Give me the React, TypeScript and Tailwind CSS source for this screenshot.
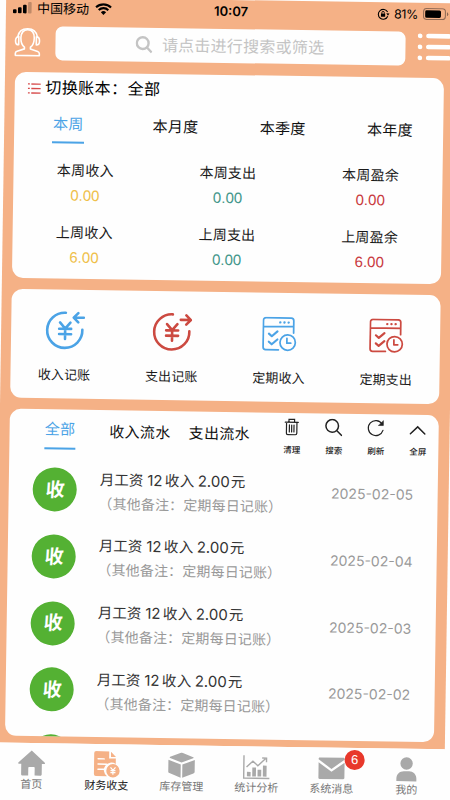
import type { FC, ReactNode } from "react";
import React from "react";

const periods = ["本周", "本月度", "本季度", "本年度"];

const stats = [
  { label: "本周收入", value: "0.00", color: "text-[#efc04a]" },
  { label: "本周支出", value: "0.00", color: "text-[#44978b]" },
  { label: "本周盈余", value: "0.00", color: "text-[#c93b3e]" },
  { label: "上周收入", value: "6.00", color: "text-[#efc04a]" },
  { label: "上周支出", value: "0.00", color: "text-[#44978b]" },
  { label: "上周盈余", value: "6.00", color: "text-[#c93b3e]" },
];

const dates = ["2025-02-05", "2025-02-04", "2025-02-03", "2025-02-02", "2025-02-01"];

const CoinIcon: FC<{ out?: boolean }> = ({ out }) => (
  <svg width="40" height="40" viewBox="0 0 40 40" fill="none" stroke="currentColor" strokeWidth="2.6" strokeLinecap="round" strokeLinejoin="round">
    <path d="M20.5 2.2A17.6 17.6 0 1 0 37.2 19" />
    <path d="M14.8 12l5.2 6 5.2-6M20 18v10.5M14 18.3h12M14 23.6h12" />
    {out ? <path d="M28.5 7.6h9.7M34 3l4.6 4.6-4.6 4.6" /> : <path d="M38.5 7h-9.7M33 2.4L28.4 7l4.6 4.6" />}
  </svg>
);

const ScheduleIcon = () => (
  <svg width="35" height="35" viewBox="0 0 36 36" fill="none" stroke="currentColor" strokeWidth="1.8" strokeLinecap="round" strokeLinejoin="round">
    <path d="M17 34H3.8A2.6 2.6 0 0 1 1.2 31.4V3.8A2.6 2.6 0 0 1 3.8 1.2h26a2.6 2.6 0 0 1 2.6 2.6V16.5M1.2 10h31.2" />
    <path d="M7 17.5l3 2.6 5.8-5M7 25.8l3 2.6 5.8-5" strokeWidth="2.2" />
    <circle cx="26.4" cy="26.4" r="7.9" />
    <path d="M25.6 22v5h4" />
    <path d="M18.5 5.8h.1M22.8 5.8h.1M27.1 5.8h.1" strokeWidth="2.4" />
  </svg>
);

const shortcuts = [
  { label: "收入记账", color: "text-[#4ba3e6]", icon: <CoinIcon /> },
  { label: "支出记账", color: "text-[#cc4a41]", icon: <CoinIcon out /> },
  { label: "定期收入", color: "text-[#4ba3e6]", icon: <ScheduleIcon /> },
  { label: "定期支出", color: "text-[#cc4a41]", icon: <ScheduleIcon /> },
];

const actions = [
  {
    label: "清理",
    icon: <path d="M2.5 4.3h13M6.2 4V1.3h5.6V4M3.8 4.5v10.8a1.4 1.4 0 0 0 1.4 1.4h7.6a1.4 1.4 0 0 0 1.4-1.4V4.5M6.7 7v7M9 7v7M11.3 7v7" strokeWidth="1.2" />,
  },
  {
    label: "搜索",
    icon: <path d="M7.5 1a6.3 6.3 0 1 0 0 12.6 6.3 6.3 0 0 0 0-12.6M12 11.8l4.8 4.8" strokeWidth="1.5" />,
  },
  {
    label: "刷新",
    icon: (
      <>
        <path d="M15.3 4.6A7.5 7.5 0 1 0 16.3 11" strokeWidth="1.2" />
        <path d="M16.6 1.6v4.6H12z" fill="currentColor" strokeWidth=".6" />
      </>
    ),
  },
  { label: "全屏", icon: <path d="M1.8 14L9 7l7.2 7" strokeWidth="1.5" /> },
];

const navItems = [
  {
    label: "首页",
    icon: <path d="M14 .5L1 12.3c-.8.8-.5 1.5.5 1.5h2.2V24c0 1 .5 1.5 1.4 1.5h5.7V18c0-.7.4-1 1-1h4.4c.6 0 1 .3 1 1v7.5h5.7c.9 0 1.4-.5 1.4-1.5V13.8h2.2c1 0 1.3-.7.5-1.5z" />,
  },
  {
    label: "财务收支",
    icon: (
      <>
        <path d="M3.5 0h13v7.2h6.7v5.5a7.5 7.5 0 0 0-8.6 12.3H3.5a2 2 0 0 1-2-2V2a2 2 0 0 1 2-2zM18.3.5l5 5.2h-5z" />
        <path d="M5.5 7.7h6M5.5 13h8.500M5.5 18.2h6" stroke="white" strokeWidth="1.5" strokeLinecap="round" />
        <circle cx="20.5" cy="19.5" r="6.7" />
        <path d="M18 16l2.5 3 2.5-3M20.5 19v4.5M18 19.3h5M18 21.3h5" fill="none" stroke="white" strokeWidth="1.2" />
      </>
    ),
  },
  {
    label: "库存管理",
    icon: <path d="M14 .1l11.500 4.500c.7.3.7.8 0 1.1L14 10.200 2.500 5.700c-.7-.3-.7-.8 0-1.100zM.8 7.500l12.400 4.700V25.500L2 20.900C1.100 20.500.8 20.100.8 19.300zM27.200 7.500v11.800c0 .8-.3 1.200-1.200 1.600L14.800 25.500V12.200z" />,
  },
  {
    label: "统计分析",
    icon: (
      <>
        <path d="M1.3 2v22.800H27M4 13.700l6.300-6 5 4.500 7.500-7M19.500 4.500h4.400v4" fill="none" stroke="currentColor" strokeWidth="1.4" />
        <path d="M4.500 18.5h3.700V23H4.500zM9.800 14h3.700v9H9.800zM15.100 16.300h3.700V23h-3.700zM20.400 12h3.700v11h-3.700z" />
      </>
    ),
  },
  {
    label: "系统消息",
    badge: 6,
    icon: <path d="M2.2 3h23.600c.7 0 1.200.5 1.200 1.200v.6L14 14.300 1 4.800v-.6C1 3.500 1.500 3 2.200 3zM1 7.800l13 9.400 13-9.400v15.500c0 .7-.5 1.200-1.200 1.200H2.200c-.7 0-1.200-.5-1.200-1.200z" />,
  },
  {
    label: "我的",
    icon: (
      <>
        <circle cx="14" cy="7.7" r="6.2" />
        <path d="M4 25.500v-2.600c0-4.600 3.400-7.400 7.400-7.400h5.200c4 0 7.400 2.800 7.400 7.400v2.600z" />
      </>
    ),
  },
];

const Card: FC<{ className: string; children: ReactNode }> = ({ className, children }) => (
  <section className={`ml-[10.4px] w-[429px] shrink-0 overflow-hidden rounded-[11px] bg-[#fefefe] ${className}`}>{children}</section>
);

const StatusBar = () => (
  <div className="flex h-[24px] items-center pl-[7px] text-[13px] leading-none">
    <svg width="20" height="12" viewBox="0 0 20 12" className="-mt-[2px] mr-1">
      <rect x="0" y="7.5" width="3.6" height="4" rx="1" />
      <rect x="5" y="5.5" width="3.6" height="6" rx="1" />
      <rect x="10" y="2.8" width="3.6" height="8.7" rx="1" />
      <rect x="15" y="0" width="3.6" height="11.5" rx="1" opacity=".22" />
    </svg>
    <span className="-mt-[1px] w-[58px] whitespace-nowrap">中国移动</span>
    <svg width="17" height="12" viewBox="0 0 17 12" fill="none" stroke="black" strokeWidth="2.1" className="-mt-[2px]">
      <path d="M1 4.3a10.8 10.8 0 0 1 15 0M3.7 7a7 7 0 0 1 9.6 0" />
      <path d="M8.5 11.8L5.9 9.2a3.8 3.8 0 0 1 5.2 0z" fill="black" stroke="none" />
    </svg>
    <span className="-mt-[1px] ml-[102px] w-[44px] font-[Inter] text-[13px] font-semibold">10:07</span>
    <svg width="13" height="12" viewBox="0 0 13 12" fill="none" stroke="black" strokeWidth="1.1" className="ml-[119px]">
      <path d="M10.6 3.7A4.9 4.9 0 1 0 10.8 7.8" />
      <path d="M9.3 5h3.2L11 7.3z" fill="black" stroke="none" />
      <rect x="4" y="5.3" width="4.2" height="3.2" fill="black" stroke="none" />
      <path d="M4.9 5.5V4.3a1.2 1.2 0 0 1 2.4 0v1.2" strokeWidth=".9" />
    </svg>
    <span className="ml-[4px] w-[29px] font-[Inter] text-[12.5px] tracking-tight">81%</span>
    <svg width="27" height="12" viewBox="0 0 27 12" className="-mt-[2px] shrink-0">
      <rect x=".6" y=".6" width="21.8" height="10.8" rx="3" fill="none" stroke="#8d6853" strokeWidth="1" />
      <rect x="2.2" y="2.2" width="15.8" height="7.6" rx="1.5" />
      <path d="M24 4v4a2.2 2.2 0 0 0 0-4z" fill="#8d6853" />
    </svg>
  </div>
);

const SearchBar = () => (
  <div className="mt-[4.8px] flex h-[34.5px] items-center">
    <svg width="28" height="30" viewBox="0 0 28 30" fill="none" stroke="white" strokeWidth="1.6" strokeLinejoin="round" className="-mt-[2px] ml-[7.5px]">
      <path d="M11 20.3C8.400 18.500 7.300 15 7.300 11 7.300 6 9.800 2.800 14 2.800S20.700 6 20.700 11c0 4-1.100 7.500-3.700 9.300v1.700l7.300 2.400c1.200.4 1.700 1 1.700 2.200v2H2v-2c0-1.200.5-1.800 1.700-2.200L11 22z" />
      <path d="M4.300 9.600C5.200 4.500 8.500 1.800 14 1.800s8.800 2.700 9.700 7.800M5.200 9.800c-2 0-3.200 1.500-3.200 4.100S3.200 18 5.200 18zM22.800 9.800c2 0 3.200 1.500 3.200 4.100s-1.200 4.100-3.200 4.100z" />
    </svg>
    <div className="ml-[14px] flex h-full w-[350.5px] items-center justify-center rounded-[7px] bg-[#fefefe] text-[16px] tracking-[.25px] text-[#c4c4c4]">
      <svg width="17" height="18" viewBox="0 0 17 18" fill="none" stroke="#c4c4c4" strokeWidth="2.4" className="mr-[9px]">
        <circle cx="7.2" cy="7.4" r="5.9" />
        <path d="M11.5 11.8l4.8 4.9" />
      </svg>
      <span className="mt-[1px]">请点击进行搜索或筛选</span>
    </div>
    <svg width="36" height="28" viewBox="0 0 36 28" fill="white" className="-mt-[4.5px] ml-[11.5px]">
      {[3, 14, 25].map((y) => (
        <g key={y}>
          <circle cx="2.5" cy={y} r="2.4" />
          <rect x="8.5" y={y - 2.3} width="25" height="4.6" rx="2.3" />
        </g>
      ))}
    </svg>
  </div>
);

const Summary = () => (
  <Card className="mt-[11.7px] flex h-[206.5px] flex-col">
    <div className="mt-[4.5px] flex h-[24px] items-center pl-[12.5px] text-[16px] tracking-[.5px] text-black">
      <svg width="13" height="11" viewBox="0 0 13 11" stroke="#d64a4a" strokeWidth="1.3" className="mr-[4.5px]">
        <path d="M0 1h2M0 5.5h2M0 10h2M3.5 1H13M3.5 5.5H13M3.5 10H13" />
      </svg>
      切换账本：全部
    </div>
    <div className="mt-[12.5px] grid grid-cols-4 text-[15px] tracking-[.2px]">
      {periods.map((name, i) => (
        <div key={name} className="flex flex-col items-center">
          <span className={i === 0 ? "leading-[22px] text-[#4ba3e6]" : "leading-[24px] text-[#111]"}>{name}</span>
          {i === 0 && <span className="mt-[6px] h-[2px] w-[32px] bg-[#4ba3e6]" />}
        </div>
      ))}
    </div>
    <div className="mr-[1px] mt-[15.3px] grid grid-cols-3 text-center">
      {stats.map((s) => (
        <div key={s.label} className="h-[61.6px]">
          <div className="text-[14px] leading-[24px] tracking-[.2px] text-[#1a1a1a]">{s.label}</div>
          <div className={`mt-[1px] text-[15px] leading-[24px] ${s.color}`}>{s.value}</div>
        </div>
      ))}
    </div>
  </Card>
);

const Shortcuts = () => (
  <Card className="mt-[10.5px] grid h-[108.7px] grid-cols-4">
    {shortcuts.map((s) => (
      <div key={s.label} className="flex flex-col items-center pr-[1px] pt-[20.5px]">
        <div className={`flex h-[42px] items-center ${s.color}`}>{s.icon}</div>
        <span className="mt-[13.5px] text-[13px] leading-[20px] tracking-[.1px] text-[#1a1a1a]">{s.label}</span>
      </div>
    ))}
  </Card>
);

const Records = () => (
  <Card className="mt-[11.3px] h-[326.7px]">
    <div className="flex h-[47px] text-[15px] tracking-[.3px] text-[#111]">
      <div className="ml-[34.5px] flex w-[32px] flex-col items-center pt-[9.5px] text-[#4ba3e6]">
        <span className="leading-[22px]">全部</span>
        <span className="mt-[6.5px] h-[2px] w-full bg-[#4ba3e6]" />
      </div>
      <span className="ml-[33.5px] w-[81px] whitespace-nowrap pt-[11px] leading-[22px]">收入流水</span>
      <span className="w-[82px] whitespace-nowrap pt-[11px] leading-[22px]">支出流水</span>
      <div className="ml-[2px] flex">
        {actions.map((a) => (
          <div key={a.label} className="flex w-[42px] flex-col items-center pt-[5.5px] text-[#222]">
            <svg width="18" height="18" viewBox="0 0 18 18" fill="none" stroke="currentColor" strokeLinecap="round">
              {a.icon}
            </svg>
            <span className="mt-[7px] text-[8.5px] font-medium leading-[14px] tracking-normal">{a.label}</span>
          </div>
        ))}
      </div>
    </div>
    {dates.map((date) => (
      <div key={date} className="flex h-[66.7px] items-center">
        <div className="ml-[24px] flex size-[44px] items-center justify-center rounded-full bg-[#54b133] text-white">
          <span className="-rotate-3 -skew-x-6 text-[19px] font-bold leading-none">收</span>
        </div>
        <div className="ml-[22.5px] mt-[2.5px] w-[231.5px] whitespace-nowrap">
          <div className="flex text-[14.5px] leading-[24px] text-[#333]">
            <span>月工资</span>
            <span className="ml-[4px] w-[17.5px] font-[Inter] text-[15px]">12</span>
            <span className="tracking-[.5px]">收入</span>
            <span className="ml-[3px] w-[33px] font-[Inter] text-[15px]">2.00</span>
            <span>元</span>
          </div>
          <div className="-ml-[1px] text-[14px] leading-[24px] tracking-[.15px] text-[#999]">（其他备注：定期每日记账）</div>
        </div>
        <span className="font-[Inter] text-[14px] leading-none text-[#999]">{date}</span>
      </div>
    ))}
  </Card>
);

const TabBar = () => (
  <nav className="grid h-[80px] grid-cols-6 bg-[#fefefe] text-[11px] text-[#777]">
    {navItems.map((item, i) => (
      <div key={item.label} className="flex flex-col items-center pr-[1px] pt-[7px]">
        <div className={`relative ${i === 1 ? "text-[#f5b186]" : "text-[#a9a9a9]"}`}>
          <svg width="28" height="27" viewBox="0 0 28 27" fill="currentColor">
            {item.icon}
          </svg>
          {item.badge && (
            <span className="absolute -right-[19px] -top-[4.5px] flex size-[20px] items-center justify-center rounded-full bg-[#e8382b] text-[13px] text-white">
              {item.badge}
            </span>
          )}
        </div>
        <span className={`mt-[.5px] leading-[14px] ${i === 1 ? "text-[#222]" : ""}`}>{item.label}</span>
      </div>
    ))}
  </nav>
);

const App = () => {
  return (
    <div className="h-[800px] w-[450px] overflow-hidden bg-[#fefefe] font-['Liberation_Sans','Noto_Sans_CJK_SC',sans-serif]">
      <div className="flex h-[830px] w-[450px] origin-top-left translate-x-[6.2px] translate-y-[-3.4px] rotate-[0.87deg] flex-col">
        <div className="flex h-[745.5px] shrink-0 flex-col bg-[#f5b186]">
          <StatusBar />
          <SearchBar />
          <Summary />
          <Shortcuts />
          <Records />
        </div>
        <TabBar />
      </div>
    </div>
  );
};

export default App;
